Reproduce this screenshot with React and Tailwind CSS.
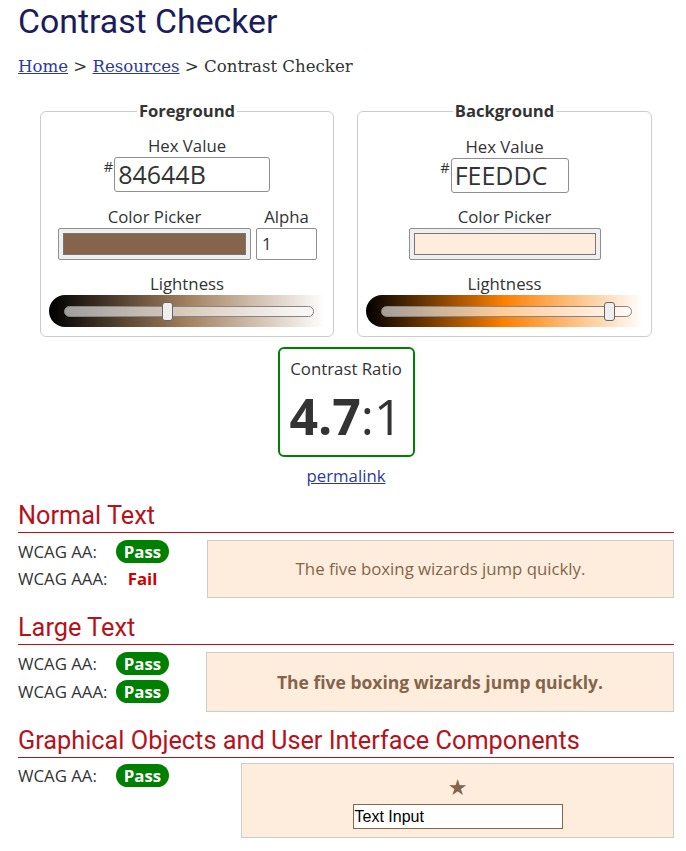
import React from 'react';

const FG = '#84644B';

// fake range slider drawn over a lightness gradient
function Lightness({ gradient, pos }) {
  return (
    <div className="flex flex-col items-center">
      <div className="text-[16.8px] leading-[20px] text-[#333]">Lightness</div>
      <div className={`mt-[1px] h-[32px] w-full rounded-l-full flex items-center pl-[15px] pr-[11px] ${gradient}`}>
        <div className="relative h-[11px] w-full rounded-full border border-[#858585] bg-white/60">
          <div
            className="absolute top-[-5px] h-[19px] w-[11px] rounded-[3px] border border-[#666] bg-[#eeeeee]"
            style={{ left: `calc(${pos}% - 6px)` }}
          />
        </div>
      </div>
    </div>
  );
}

function HexInput({ value, width }) {
  return (
    <div className="flex flex-col items-center">
      <div className="text-[16.8px] leading-[20px] text-[#333]">Hex Value</div>
      <div className="mt-[1px] flex items-start">
        <span className="mt-[2px] mr-[1px] text-[14.5px] leading-[16px] text-[#333]">#</span>
        <div className={`h-[35px] ${width} rounded-[3px] border border-[#8f8f8f] bg-white pl-[3px] text-[25px] leading-[33px] text-[#333]`}>
          {value}
        </div>
      </div>
    </div>
  );
}

function Swatch({ color, width }) {
  return (
    <div className={`h-[32px] ${width} rounded-[2px] border border-[#8f8f8f] bg-[#efefef] p-[4px]`}>
      <div className="h-full w-full border border-[#777]" style={{ backgroundColor: color }} />
    </div>
  );
}

function Badge() {
  return (
    <span className="inline-flex h-[23px] w-[53px] items-center justify-center rounded-full bg-[#008000] text-[16.8px] font-bold text-white">
      Pass
    </span>
  );
}

function ResultRow({ label, pass }) {
  return (
    <div className="flex h-[23px] items-center">
      <span className="w-[98px] text-[16.8px] text-[#333]">{label}</span>
      <span className="flex w-[53px] justify-center">
        {pass ? <Badge /> : <span className="text-[16.8px] font-bold text-[#cc0000]">Fail</span>}
      </span>
    </div>
  );
}

function SectionHead({ children, className }) {
  return (
    <h2 className={`border-b border-[#b5121b] pb-[2px] text-[25.3px] leading-[28px] text-[#b5121b] font-['Roboto',sans-serif] ${className}`}>
      {children}
    </h2>
  );
}

export default function App() {
  return (
    <div className="min-h-[851px] bg-white pl-[18px] pr-[12px] font-['Open_Sans',sans-serif] text-[#333]">
      <h1 className="pt-[2px] font-['Roboto',sans-serif] text-[33.8px] leading-[40px] text-[#1a1c5c]">Contrast Checker</h1>
      <nav className="mt-[15px] font-['DejaVu_Serif',serif] text-[16.6px] leading-[20px] text-[#333]">
        <a href="#" className="text-[#2b3a9a] underline">Home</a> &gt;{' '}
        <a href="#" className="text-[#2b3a9a] underline">Resources</a> &gt; Contrast Checker
      </nav>

      <div className="mt-[23px] flex gap-[23px] px-[22px]">
        {/* Foreground */}
        <fieldset className="w-[294px] rounded-[6px] border border-[#cccccc] px-[8px] pb-[9px]">
          <legend className="mx-auto px-[2px] text-[16.6px] font-bold leading-[22px] text-[#333]">Foreground</legend>
          <div className="mt-[14px]">
            <HexInput value="84644B" width="w-[156px]" />
          </div>
          <div className="mt-[15px] flex justify-center gap-[5px] pl-[1px]">
            <div className="flex flex-col items-center">
              <div className="mb-[1px] text-[16.8px] leading-[20px]">Color Picker</div>
              <Swatch color={FG} width="w-[193px]" />
            </div>
            <div className="flex flex-col items-center">
              <div className="mb-[1px] text-[16.8px] leading-[20px]">Alpha</div>
              <div className="h-[32px] w-[61px] rounded-[2px] border border-[#8f8f8f] bg-white pl-[5px] text-[16.8px] leading-[30px]">1</div>
            </div>
          </div>
          <div className="mt-[14px]">
            <Lightness gradient="bg-[linear-gradient(to_right,#000000,#a3805e_50%,#ffffff)]" pos={41.5} />
          </div>
        </fieldset>

        {/* Background */}
        <fieldset className="w-[295px] rounded-[6px] border border-[#cccccc] px-[8px] pb-[9px]">
          <legend className="mx-auto px-[2px] text-[16.6px] font-bold leading-[22px] text-[#333]">Background</legend>
          <div className="mt-[15px]">
            <HexInput value="FEEDDC" width="w-[118px]" />
          </div>
          <div className="mt-[14px] flex flex-col items-center">
            <div className="mb-[1px] text-[16.8px] leading-[20px]">Color Picker</div>
            <Swatch color="#FEEDDC" width="w-[192px]" />
          </div>
          <div className="mt-[14px]">
            <Lightness gradient="bg-[linear-gradient(to_right,#000000,#fd8002_50%,#ffffff)]" pos={91.5} />
          </div>
        </fieldset>
      </div>

      {/* Ratio */}
      <div className="mt-[10px] flex flex-col items-center">
        <div className="flex h-[110px] w-[137px] flex-col items-center rounded-[6px] border-2 border-[#008000] pt-[10px]">
          <div className="text-[16.8px] leading-[20px]">Contrast Ratio</div>
          <div className="mt-[12px] text-[50px] leading-[50px] text-[#333]">
            <span className="font-bold">4.7</span>:1
          </div>
        </div>
        <a href="#" className="mt-[9px] text-[16.8px] leading-[20px] text-[#2b3a9a] underline">permalink</a>
      </div>

      {/* Normal text */}
      <SectionHead className="mt-[16px]">Normal Text</SectionHead>
      <div className="mt-[7px] flex">
        <div className="flex w-[189px] flex-col gap-[4px]">
          <ResultRow label="WCAG AA:" pass />
          <ResultRow label="WCAG AAA:" pass={false} />
        </div>
        <div className="flex h-[58px] flex-1 items-center justify-center border border-[#cccccc] bg-[#FEEDDC] text-[16.8px] text-[#84644B]">
          The five boxing wizards jump quickly.
        </div>
      </div>

      {/* Large text */}
      <SectionHead className="mt-[16px]">Large Text</SectionHead>
      <div className="mt-[7px] flex">
        <div className="flex w-[188px] flex-col gap-[5px]">
          <ResultRow label="WCAG AA:" pass />
          <ResultRow label="WCAG AAA:" pass />
        </div>
        <div className="flex h-[60px] flex-1 items-center justify-center border border-[#cccccc] bg-[#FEEDDC] text-[17.5px] font-bold text-[#84644B]">
          The five boxing wizards jump quickly.
        </div>
      </div>

      {/* Graphical */}
      <SectionHead className="mt-[15px]">Graphical Objects and User Interface Components</SectionHead>
      <div className="mt-[5px] flex">
        <div className="w-[223px] pt-[1px]">
          <ResultRow label="WCAG AA:" pass />
        </div>
        <div className="flex h-[75px] flex-1 flex-col items-center border border-[#cccccc] bg-[#FEEDDC] pt-[12px]">
          <span className="text-[22px] leading-[24px] text-[#84644B] font-['DejaVu_Sans',sans-serif]">★</span>
          <div className="mt-[4px] h-[25px] w-[210px] border border-[#84644B] bg-white pl-[1px] font-['Liberation_Sans',sans-serif] text-[16px] leading-[23px] text-black">
            Text Input
          </div>
        </div>
      </div>
    </div>
  );
}
